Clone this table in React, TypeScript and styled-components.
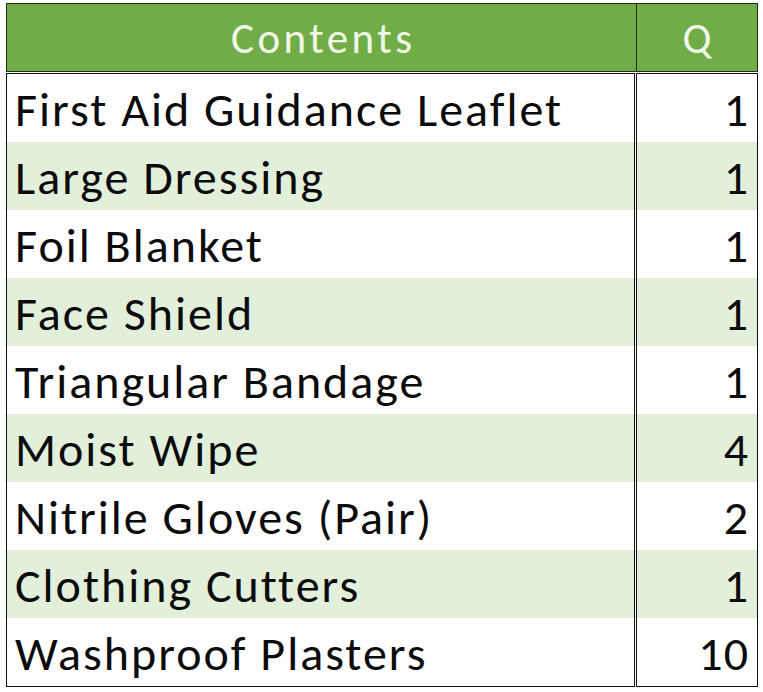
import React from "react";
import styled, { createGlobalStyle } from "styled-components";

const GlobalStyle = createGlobalStyle`
  html, body { margin: 0; padding: 0; background: #ffffff; }
  body { font-family: Carlito, Lato, "Liberation Sans", sans-serif; }
`;

const Sheet = styled.div`
  margin: 3px 0 0 6px;
  width: 752px;
  display: flex;
  flex-direction: column;
`;

const Header = styled.div`
  display: grid;
  grid-template-columns: 630px 1fr;
  height: 67px;
  background: #70ad47;
  border: 1px solid #1f2a1a;
`;

const HeadCell = styled.div<{ $divider?: boolean }>`
  display: flex;
  align-items: center;
  justify-content: center;
  color: #f1f8ea;
  font-size: 43px;
  letter-spacing: 3.5px;
  text-indent: 3.5px;
  padding-top: 1px;
  border-right: ${(p) => (p.$divider ? "1px solid #1f2a1a" : "none")};
`;

const Body = styled.div`
  display: grid;
  grid-template-columns: 629px 1fr;
  margin-top: 1px;
  column-gap: 1px;
`;

const Column = styled.div`
  display: flex;
  flex-direction: column;
  border: 1px solid #111;
`;

const Cell = styled.div<{ $striped: boolean; $align: "left" | "right" }>`
  height: 68px;
  display: flex;
  align-items: center;
  justify-content: ${(p) => (p.$align === "right" ? "flex-end" : "flex-start")};
  padding: 2px ${(p) => (p.$align === "right" ? "8px" : "0")} 0
    ${(p) => (p.$align === "left" ? "8px" : "0")};
  box-sizing: border-box;
  background: ${(p) => (p.$striped ? "#e2efda" : "#ffffff")};
  color: #0b0b0b;
  font-size: 48px;
  letter-spacing: ${(p) => (p.$align === "left" ? "2px" : "1px")};
  white-space: nowrap;
`;

const items: [string, string][] = [
  ["First Aid Guidance Leaflet", "1"],
  ["Large Dressing", "1"],
  ["Foil Blanket", "1"],
  ["Face Shield", "1"],
  ["Triangular Bandage", "1"],
  ["Moist Wipe", "4"],
  ["Nitrile Gloves (Pair)", "2"],
  ["Clothing Cutters", "1"],
  ["Washproof Plasters", "10"],
];

export default function App() {
  return (
    <>
      <GlobalStyle />
      <Sheet>
        <Header>
          <HeadCell $divider>Contents</HeadCell>
          <HeadCell>Q</HeadCell>
        </Header>
        <Body>
          <Column>
            {items.map(([name], i) => (
              <Cell key={name} $striped={i % 2 === 1} $align="left">
                {name}
              </Cell>
            ))}
          </Column>
          <Column>
            {items.map(([name, q], i) => (
              <Cell key={name} $striped={i % 2 === 1} $align="right">
                {q}
              </Cell>
            ))}
          </Column>
        </Body>
      </Sheet>
    </>
  );
}
